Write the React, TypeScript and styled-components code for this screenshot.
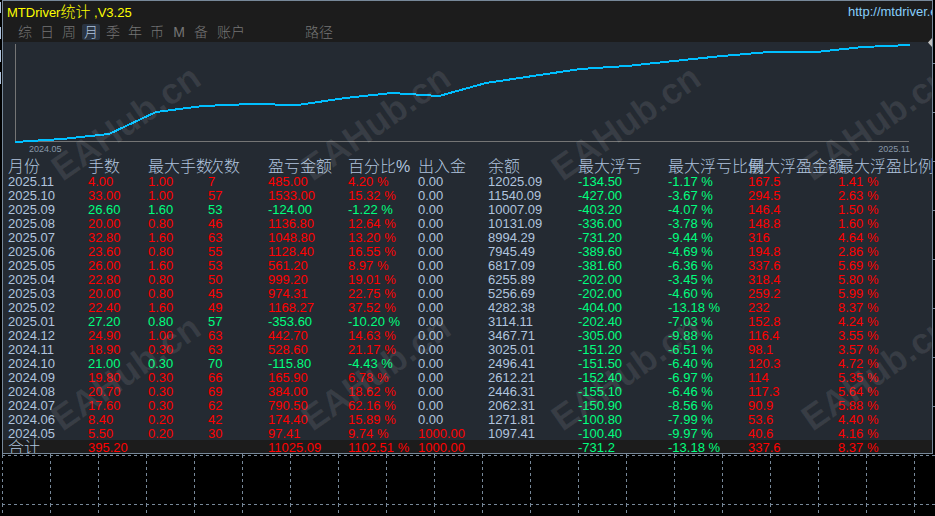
import React from "react";
import styled, { createGlobalStyle } from "styled-components";

const GlobalStyle = createGlobalStyle`
  * { box-sizing: border-box; }
  body {
    margin: 0;
    background: #000;
    color: #b0c4de;
    font: 13px/14px "Liberation Sans", "Noto Sans CJK SC", sans-serif;
    overflow: hidden;
  }
`;

const Screen = styled.div`
  position: relative;
  display: flex;
  flex-direction: column;
  min-height: 100vh;
  overflow: hidden;
`;

const Panel = styled.main`
  position: relative;
  margin: 0 2px 0 2px;
  border: 1px solid #778899;
  background: #242a32;
  overflow: hidden;
`;

const Header = styled.header`
  display: flex;
  flex-direction: column;
  height: 41px;
  background: #1c1c1c;
`;

const TitleRow = styled.div`
  display: flex;
  justify-content: space-between;
  height: 22px;
  line-height: 22px;
  padding-left: 4px;
`;

const Title = styled.h1`
  margin: 0;
  font: inherit;
  color: #ffff00;
  white-space: pre;
`;

const Cjk = styled.span`
  font-size: 15px;
  font-weight: 300;
`;

const SiteLink = styled.a`
  width: 84px;
  color: #87cefa;
  text-decoration: none;
  white-space: nowrap;
`;

const Tabs = styled.nav`
  display: flex;
  align-items: center;
  gap: 4px;
  height: 18px;
  padding-left: 13px;
`;

const Tab = styled.button<{ $active?: boolean; $wide?: boolean }>`
  width: ${(p) => (p.$wide ? 34 : 18)}px;
  height: 16px;
  margin: 0;
  padding: 0;
  border: 0;
  border-radius: 2px;
  background: ${(p) => (p.$active ? "#2a3442" : "transparent")};
  color: ${(p) => (p.$active ? "#b0c4de" : "#757575")};
  font: 300 14px/16px "Liberation Sans", "Noto Sans CJK SC", sans-serif;
  white-space: nowrap;
`;

const PathTab = styled(Tab)`
  margin-left: 50px;
`;

const ChartArea = styled.section`
  display: flex;
  flex-direction: column;
  height: 116px;
`;

const ChartSvg = styled.svg`
  display: block;
  width: 100%;
  height: 101px;
`;

const ChartLabels = styled.div`
  display: flex;
  justify-content: space-between;
  padding: 0 22px 0 26px;
  font-size: 9px;
  line-height: 12px;
  color: #8797a8;
`;

const Table = styled.table`
  width: 100%;
  table-layout: fixed;
  border-collapse: collapse;
`;

const HeadCell = styled.th`
  height: 16px;
  padding: 2px 0 0 5px;
  font-size: 16px;
  line-height: 14px;
  font-weight: 300;
  text-align: left;
  white-space: nowrap;
`;

const tones = { plain: "#b0c4de", red: "#ff0000", green: "#00ff7f" };
type Tone = keyof typeof tones;

const Cell = styled.td<{ $tone: Tone }>`
  height: 14px;
  padding: 2px 0 0 5px;
  line-height: 12px;
  color: ${(p) => tones[p.$tone]};
  white-space: nowrap;
`;

const TotalRow = styled.tr`
  background: #1c1c1c;
`;

const TotalCell = styled(Cell)`
  height: 13px;
  padding: 3px 0 0 5px;
  line-height: 10px;
`;

const TotalLabel = styled.th`
  padding: 3px 0 0 5px;
  font-size: 16px;
  line-height: 10px;
  font-weight: 300;
  text-align: left;
`;

const WatermarkLayer = styled.div`
  position: absolute;
  inset: 0;
  pointer-events: none;
`;

const Watermark = styled.span<{ $x: number; $y: number }>`
  position: absolute;
  left: ${(p) => p.$x}px;
  top: ${(p) => p.$y}px;
  transform: translate(-50%, -50%) rotate(-35deg);
  font: 700 36px/40px "Liberation Sans", sans-serif;
  color: rgba(255, 255, 255, 0.09);
`;

const GridArea = styled.svg`
  display: block;
  flex: 1 1 0;
  width: 100%;
  height: 0;
  min-height: 0;
`;

const EdgeMarks = styled.svg`
  position: absolute;
  top: 0;
  left: 0;
  width: 1px;
  height: 100px;
`;

const RightTicks = styled.svg`
  position: absolute;
  top: 0;
  right: 0;
  width: 7px;
  height: 454px;
`;

const tabs = ["综", "日", "周", "月", "季", "年", "币", "M", "备"];
const widths = [80, 60, 60, 60, 80, 70, 70, 90, 90, 80, 90];
const heads = ["月份", "手数", "最大手数", "次数", "盈亏金额", "百分比%", "出入金", "余额", "最大浮亏", "最大浮亏比例", "最大浮盈金额", "最大浮盈比例"];

const rows = `2025.11|4.00|1.00|7|485.00|4.20 %|0.00|12025.09|-134.50|-1.17 %|167.5|1.41 %
2025.10|33.00|1.00|57|1533.00|15.32 %|0.00|11540.09|-427.00|-3.67 %|294.5|2.63 %
2025.09|26.60|1.60|53|-124.00|-1.22 %|0.00|10007.09|-403.20|-4.07 %|146.4|1.50 %
2025.08|20.00|0.80|46|1136.80|12.64 %|0.00|10131.09|-336.00|-3.78 %|148.8|1.60 %
2025.07|32.80|1.60|63|1048.80|13.20 %|0.00|8994.29|-731.20|-9.44 %|316|4.64 %
2025.06|23.60|0.80|55|1128.40|16.55 %|0.00|7945.49|-389.60|-4.69 %|194.8|2.86 %
2025.05|26.00|1.60|53|561.20|8.97 %|0.00|6817.09|-381.60|-6.36 %|337.6|5.69 %
2025.04|22.80|0.80|50|999.20|19.01 %|0.00|6255.89|-202.00|-3.45 %|318.4|5.80 %
2025.03|20.00|0.80|45|974.31|22.75 %|0.00|5256.69|-202.00|-4.60 %|259.2|5.99 %
2025.02|22.40|1.60|49|1168.27|37.52 %|0.00|4282.38|-404.00|-13.18 %|232|8.37 %
2025.01|27.20|0.80|57|-353.60|-10.20 %|0.00|3114.11|-202.40|-7.03 %|152.8|4.24 %
2024.12|24.90|1.00|63|442.70|14.63 %|0.00|3467.71|-305.00|-9.88 %|116.4|3.55 %
2024.11|18.90|0.30|63|528.60|21.17 %|0.00|3025.01|-151.20|-6.51 %|98.1|3.57 %
2024.10|21.00|0.30|70|-115.80|-4.43 %|0.00|2496.41|-151.50|-6.40 %|120.3|4.72 %
2024.09|19.80|0.30|66|165.90|6.78 %|0.00|2612.21|-152.40|-6.97 %|114|5.35 %
2024.08|20.70|0.30|69|384.00|18.62 %|0.00|2446.31|-155.10|-6.46 %|117.3|5.64 %
2024.07|17.60|0.30|62|790.50|62.16 %|0.00|2062.31|-150.90|-8.56 %|90.9|5.88 %
2024.06|8.40|0.20|42|174.40|15.89 %|0.00|1271.81|-100.80|-7.99 %|53.6|4.40 %
2024.05|5.50|0.20|30|97.41|9.74 %|1000.00|1097.41|-100.40|-9.97 %|40.6|4.16 %`
  .split("\n")
  .map((line) => line.split("|"));

const totals = ["395.20", "", "", "11025.09", "1102.51 %", "1000.00", "", "-731.2", "-13.18 %", "337.6", "8.37 %"];

const toneOf = (row: string[], col: number): Tone => {
  if (col === 0 || col === 7) return "plain";
  if (col === 6) return row[6] === "0.00" ? "plain" : "red";
  if (col >= 10) return "red";
  if (col >= 8) return "green";
  return row[4].startsWith("-") ? "green" : "red";
};

const curve = [100, 97, 92, 70, 64, 62, 63, 56, 51, 54, 41, 34, 27, 24, 19, 14, 10, 10, 5, 3];
const curvePoints = curve.map((y, i) => `${Math.round(12 + i * 47.1)},${y}`).join(" ");

const watermarks = [123, 373, 623, 873].flatMap((x) => [122, 372].map((y) => ({ x, y })));

export default function App() {
  return (
    <Screen>
      <GlobalStyle />
      <EdgeMarks aria-hidden="true" shapeRendering="crispEdges">
        <path d="M0 2h1v11h-1zM0 27h1v12h-1zM0 50h1v12h-1zM0 72h1v12h-1z" fill="#b0c4de" />
      </EdgeMarks>
      <Panel>
        <Header>
          <TitleRow>
            <Title>MTDriver<Cjk>统计</Cjk> ,V3.25</Title>
            <SiteLink href="http://mtdriver.eahub.cn">http://mtdriver.eahub.cn</SiteLink>
          </TitleRow>
          <Tabs>
            {tabs.map((t) => (
              <Tab key={t} type="button" $active={t === "月"}>{t}</Tab>
            ))}
            <Tab type="button" $wide>账户</Tab>
            <PathTab type="button" $wide>路径</PathTab>
          </Tabs>
        </Header>
        <ChartArea>
          <ChartSvg viewBox="0 0 929 101" preserveAspectRatio="none" shapeRendering="crispEdges" role="img" aria-label="余额">
            <path d="M12.5 2V100M12 99.5H906" stroke="#757575" fill="none" />
            <polyline points={curvePoints} stroke="#00bfff" strokeWidth="2" fill="none" />
          </ChartSvg>
          <ChartLabels>
            <span>2024.05</span>
            <span>2025.11</span>
          </ChartLabels>
        </ChartArea>
        <Table>
          <colgroup>
            {widths.map((w, i) => <col key={i} width={w} />)}
            <col />
          </colgroup>
          <thead>
            <tr>{heads.map((h) => <HeadCell key={h} scope="col">{h}</HeadCell>)}</tr>
          </thead>
          <tbody>
            {rows.map((row) => (
              <tr key={row[0]}>
                {row.map((v, i) => <Cell key={i} $tone={toneOf(row, i)}>{v}</Cell>)}
              </tr>
            ))}
          </tbody>
          <tfoot>
            <TotalRow>
              <TotalLabel scope="row">合计</TotalLabel>
              {totals.map((v, i) => <TotalCell key={i} $tone={v.startsWith("-") ? "green" : "red"}>{v}</TotalCell>)}
            </TotalRow>
          </tfoot>
        </Table>
        <WatermarkLayer aria-hidden="true">
          {watermarks.map((w) => <Watermark key={`${w.x}-${w.y}`} $x={w.x} $y={w.y}>EAHub.cn</Watermark>)}
        </WatermarkLayer>
      </Panel>
      <RightTicks aria-hidden="true">
        <path d="M5 63.5h2M5 112.5h2M5 161.5h2M5 210.5h2M5 259.5h2M5 308.5h2M5 357.5h2M5 406.5h2" stroke="#778899" />
        <path d="M4 38v9l-4 -4.5z" fill="#c0c0c0" />
      </RightTicks>
      <GridArea aria-hidden="true" shapeRendering="crispEdges">
        <defs>
          <pattern id="grid" x="2" y="1" width="48" height="49" patternUnits="userSpaceOnUse">
            <path d="M0 0.5H48M0.5 0V49" stroke="#778899" strokeDasharray="3 3" fill="none" />
          </pattern>
        </defs>
        <rect width="100%" height="100%" fill="url(#grid)" />
      </GridArea>
    </Screen>
  );
}
